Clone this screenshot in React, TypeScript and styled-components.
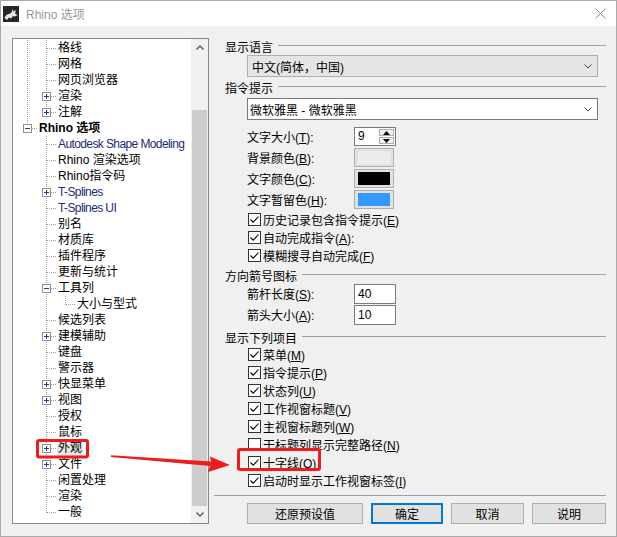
import React from "react";
import styled, { createGlobalStyle, css } from "styled-components";

const GlobalStyle = createGlobalStyle`
  html, body {
    margin: 0;
    padding: 0;
    background: #ffffff;
  }
  body {
    font-family: "Liberation Sans", "Noto Sans CJK SC", sans-serif;
    font-size: 12px;
    color: #000000;
  }
  * {
    box-sizing: border-box;
  }
`;

const Window = styled.div`
  position: relative;
  width: 617px;
  height: 537px;
  border: 1px solid #aaaaaa;
  background: #f0f0f0;
  display: flex;
  flex-direction: column;
`;

const TitleBar = styled.div`
  height: 25px;
  background: #ffffff;
  display: flex;
  align-items: center;
  padding-left: 2px;
`;

const TitleText = styled.span`
  margin-left: 7px;
  color: #999999;
  font-size: 12px;
`;

const CloseIcon = styled.svg`
  margin-left: auto;
  margin-right: 10px;
`;

const Body = styled.div`
  flex: 1;
  display: flex;
  padding: 12px 10px 0 11px;
`;

/* ---------- tree ---------- */

const TreePanel = styled.div`
  width: 197px;
  height: 486px;
  border: 1px solid #828790;
  background: #ffffff;
  display: flex;
`;

const TreeList = styled.div`
  flex: 1;
  padding: 1px 0 0 5px;
  overflow: hidden;
`;

const TreeRow = styled.div`
  display: flex;
  align-items: center;
  height: 16px;
`;

type GuideKind = "line" | "blank" | "tee" | "elbow";

const vdots = "repeating-linear-gradient(to bottom, #a0a0a0 0 1px, transparent 1px 2px)";
const hdots = "repeating-linear-gradient(to right, #a0a0a0 0 1px, transparent 1px 2px)";

const Guide = styled.span<{ $kind: GuideKind }>`
  flex: none;
  width: 19px;
  height: 16px;
  display: flex;
  align-items: center;
  background-repeat: no-repeat;
  ${({ $kind }) =>
    $kind === "line" &&
    css`
      background-image: ${vdots};
      background-size: 1px 16px;
      background-position: 9px 0;
    `}
  ${({ $kind }) =>
    $kind === "tee" &&
    css`
      background-image: ${vdots}, ${hdots};
      background-size: 1px 16px, 9px 1px;
      background-position: 9px 0, 10px 8px;
    `}
  ${({ $kind }) =>
    $kind === "elbow" &&
    css`
      background-image: ${vdots}, ${hdots};
      background-size: 1px 9px, 9px 1px;
      background-position: 9px 0, 10px 8px;
    `}
`;

const Expander = styled.span<{ $open: boolean }>`
  width: 9px;
  height: 9px;
  margin-left: 5px;
  border: 1px solid #919191;
  background-color: #ffffff;
  background-repeat: no-repeat;
  background-image: linear-gradient(#1e3c8c, #1e3c8c)
    ${({ $open }) => ($open ? "" : ", linear-gradient(#1e3c8c, #1e3c8c)")};
  background-size: 5px 1px, 1px 5px;
  background-position: 1px 3px, 3px 1px;
`;

const NodeLabel = styled.span<{ $bold?: boolean; $tint?: boolean; $selected?: boolean }>`
  margin-left: 1px;
  padding: 0 1px;
  line-height: 16px;
  white-space: nowrap;
  letter-spacing: ${({ $tint }) => ($tint ? "-0.6px" : "0")};
  font-weight: ${({ $bold }) => ($bold ? 700 : 400)};
  color: ${({ $tint }) => ($tint ? "#1d2b78" : "#000000")};
  background: ${({ $selected }) => ($selected ? "#e5e5e5" : "transparent")};
`;

const ScrollBar = styled.div`
  width: 17px;
  background: #f0f0f0;
  display: flex;
  flex-direction: column;
`;

const ScrollArrow = styled.div`
  height: 17px;
  display: flex;
  align-items: center;
  justify-content: center;
`;

const ScrollTrack = styled.div`
  flex: 1;
  padding-top: 54px;
  display: flex;
`;

const ScrollThumb = styled.div`
  flex: 1;
  margin: 0 1px;
  background: #cdcdcd;
`;

/* ---------- options pane ---------- */

const Pane = styled.div`
  width: 392px;
  margin-left: 5px;
  display: flex;
  flex-direction: column;
`;

const Section = styled.div<{ $gap: number }>`
  display: flex;
  align-items: center;
  height: 16px;
  padding-left: 11px;
  margin-top: ${({ $gap }) => $gap}px;
  &::after {
    content: "";
    flex: 1;
    height: 1px;
    margin: -2px 0 0 5px;
    background: #a0a0a0;
  }
`;

const Select = styled.div<{ $disabled?: boolean; $gap: number }>`
  margin: ${({ $gap }) => $gap}px 0 0 33px;
  width: 351px;
  height: 22px;
  display: flex;
  align-items: center;
  justify-content: space-between;
  padding: 0 5px 0 ${({ $disabled }) => ($disabled ? 4 : 2)}px;
  border: 1px solid ${({ $disabled }) => ($disabled ? "#adadad" : "#7a7a7a")};
  background: ${({ $disabled }) => ($disabled ? "#e5e5e5" : "#ffffff")};
`;

const FieldRow = styled.div<{ $gap?: number }>`
  display: flex;
  align-items: center;
  height: 21px;
  padding-left: 33px;
  margin-top: ${({ $gap }) => $gap ?? 0}px;
`;

const FieldLabel = styled.span`
  width: 107px;
`;

const Spin = styled.div`
  width: 42px;
  height: 19px;
  display: flex;
  border: 1px solid #7a7a7a;
  background: #ffffff;
`;

const SpinValue = styled.span`
  flex: 1;
  padding-left: 3px;
  line-height: 17px;
`;

const SpinButtons = styled.div`
  width: 16px;
  display: flex;
  flex-direction: column;
  padding: 1px 1px 1px 0;
  gap: 1px;
`;

const SpinButton = styled.div`
  flex: 1;
  border: 1px solid #adadad;
  background: #f0f0f0;
  display: flex;
  align-items: center;
  justify-content: center;
`;

const Swatch = styled.div<{ $color: string }>`
  width: 40px;
  height: 19px;
  display: flex;
  padding: 2px 3px;
  border: 1px solid #adadad;
  background: #e1e1e1;
  &::before {
    content: "";
    flex: 1;
    background: ${({ $color }) => $color};
  }
`;

const TextBox = styled.div`
  width: 42px;
  height: 20px;
  padding-left: 3px;
  line-height: 18px;
  border: 1px solid #7a7a7a;
  background: #ffffff;
`;

const CheckRow = styled.div`
  display: flex;
  align-items: center;
  gap: 2px;
  height: 18px;
  padding-left: 34px;
`;

const CheckBox = styled.span`
  width: 13px;
  height: 13px;
  display: flex;
  align-items: center;
  justify-content: center;
  border: 1px solid #333333;
  background: #ffffff;
`;

const Separator = styled.div`
  height: 1px;
  margin-top: 6px;
  background: #a0a0a0;
`;

const ButtonRow = styled.div`
  display: flex;
  gap: 8px;
  margin-top: 7px;
  padding-left: 33px;
`;

const Button = styled.div<{ $width: number; $default?: boolean }>`
  width: ${({ $width }) => $width}px;
  height: 21px;
  display: flex;
  align-items: center;
  justify-content: center;
  background: #e1e1e1;
  border: ${({ $default }) => ($default ? "2px solid #0078d7" : "1px solid #adadad")};
`;

const Annotations = styled.svg`
  position: absolute;
  left: -1px;
  top: -1px;
  pointer-events: none;
`;

/* ---------- data ---------- */

type Node = {
  label: string;
  guides: GuideKind[];
  expander?: "plus" | "minus";
  bold?: boolean;
  tint?: boolean;
  selected?: boolean;
};

const rhinoChild = (label: string, extra: Partial<Node> = {}): Node => ({
  label,
  guides: ["blank", "tee"],
  ...extra,
});

const nodes: Node[] = [
  { label: "格线", guides: ["line", "tee"] },
  { label: "网格", guides: ["line", "tee"] },
  { label: "网页浏览器", guides: ["line", "tee"] },
  { label: "渲染", guides: ["line", "tee"], expander: "plus" },
  { label: "注解", guides: ["line", "elbow"], expander: "plus" },
  { label: "Rhino 选项", guides: ["elbow"], expander: "minus", bold: true },
  rhinoChild("Autodesk Shape Modeling", { tint: true }),
  rhinoChild("Rhino 渲染选项"),
  rhinoChild("Rhino指令码"),
  rhinoChild("T-Splines", { tint: true, expander: "plus" }),
  rhinoChild("T-Splines UI", { tint: true }),
  rhinoChild("别名"),
  rhinoChild("材质库"),
  rhinoChild("插件程序"),
  rhinoChild("更新与统计"),
  rhinoChild("工具列", { expander: "minus" }),
  { label: "大小与型式", guides: ["blank", "line", "elbow"] },
  rhinoChild("候选列表"),
  rhinoChild("建模辅助", { expander: "plus" }),
  rhinoChild("键盘"),
  rhinoChild("警示器"),
  rhinoChild("快显菜单", { expander: "plus" }),
  rhinoChild("视图", { expander: "plus" }),
  rhinoChild("授权"),
  rhinoChild("鼠标"),
  rhinoChild("外观", { expander: "plus", selected: true }),
  rhinoChild("文件", { expander: "plus" }),
  rhinoChild("闲置处理"),
  rhinoChild("渲染"),
  { label: "一般", guides: ["blank", "elbow"] },
];

const displayItems: { text: string; key: string; checked: boolean }[] = [
  { text: "菜单", key: "M", checked: true },
  { text: "指令提示", key: "P", checked: true },
  { text: "状态列", key: "U", checked: true },
  { text: "工作视窗标题", key: "V", checked: true },
  { text: "主视窗标题列", key: "W", checked: true },
  { text: "干标题列显示完整路径", key: "N", checked: false },
  { text: "十字线", key: "O", checked: true },
  { text: "启动时显示工作视窗标签", key: "I", checked: true },
];

/* ---------- small drawings ---------- */

const Chevron = ({ up }: { up?: boolean }) => (
  <svg width="8" height="5" viewBox="0 0 8 5">
    <polyline
      points={up ? "0.5,4.5 4,1 7.5,4.5" : "0.5,0.5 4,4 7.5,0.5"}
      fill="none"
      stroke="#606060"
      strokeWidth="1.5"
    />
  </svg>
);

const DropArrow = () => (
  <svg width="8" height="5" viewBox="0 0 8 5">
    <polyline points="0.5,0.5 4,4 7.5,0.5" fill="none" stroke="#404040" strokeWidth="1" />
  </svg>
);

const Tri = ({ up }: { up?: boolean }) => (
  <svg width="7" height="4" viewBox="0 0 7 4">
    <polygon points={up ? "0,4 3.5,0 7,4" : "0,0 3.5,4 7,0"} fill="#000000" />
  </svg>
);

const Check = () => (
  <svg width="11" height="11" viewBox="0 0 11 11">
    <polyline points="1.5,5.5 4.2,8.2 9.5,2.5" fill="none" stroke="#000000" strokeWidth="1.1" />
  </svg>
);

const Key = ({ k }: { k: string }) => (
  <>
    (<u>{k}</u>)
  </>
);

const RhinoLogo = () => (
  <svg width="16" height="16" viewBox="0 0 16 16">
    <rect x="0" y="0" width="16" height="16" fill="#262626" />
    <path
      d="M1.5 12 C3 9 4 8 6 8 L8.5 6.5 L9.5 3 L10.5 5.5 L13 4 L12 7.5 L14.5 9 L12 10.5 L10 10 L8 12.5 L6 11.5 L4 14 Z"
      fill="#e6e6e6"
    />
  </svg>
);

const App: React.FC = () => (
  <>
    <GlobalStyle />
    <Window>
      <TitleBar>
        <RhinoLogo />
        <TitleText>Rhino 选项</TitleText>
        <CloseIcon width="11" height="11" viewBox="0 0 11 11">
          <path d="M0.5 0.5 L10.5 10.5 M10.5 0.5 L0.5 10.5" stroke="#8c8c8c" strokeWidth="1" />
        </CloseIcon>
      </TitleBar>

      <Body>
        <TreePanel>
          <TreeList>
            {nodes.map((n, i) => {
              const last = n.guides.length - 1;
              return (
                <TreeRow key={i}>
                  {n.guides.map((g, j) => (
                    <Guide key={j} $kind={g}>
                      {j === last && n.expander && <Expander $open={n.expander === "minus"} />}
                    </Guide>
                  ))}
                  <NodeLabel $bold={n.bold} $tint={n.tint} $selected={n.selected}>
                    {n.label}
                  </NodeLabel>
                </TreeRow>
              );
            })}
          </TreeList>
          <ScrollBar>
            <ScrollArrow>
              <Chevron up />
            </ScrollArrow>
            <ScrollTrack>
              <ScrollThumb />
            </ScrollTrack>
            <ScrollArrow>
              <Chevron />
            </ScrollArrow>
          </ScrollBar>
        </TreePanel>

        <Pane>
          <Section $gap={0}>显示语言</Section>
          <Select $disabled $gap={1}>
            <span>中文(简体，中国)</span>
            <DropArrow />
          </Select>

          <Section $gap={2}>指令提示</Section>
          <Select $gap={3}>
            <span>微软雅黑 - 微软雅黑</span>
            <DropArrow />
          </Select>

          <FieldRow $gap={6}>
            <FieldLabel>
              文字大小<Key k="T" />:
            </FieldLabel>
            <Spin>
              <SpinValue>9</SpinValue>
              <SpinButtons>
                <SpinButton>
                  <Tri up />
                </SpinButton>
                <SpinButton>
                  <Tri />
                </SpinButton>
              </SpinButtons>
            </Spin>
          </FieldRow>
          <FieldRow>
            <FieldLabel>
              背景颜色<Key k="B" />:
            </FieldLabel>
            <Swatch $color="#ececec" />
          </FieldRow>
          <FieldRow>
            <FieldLabel>
              文字颜色<Key k="C" />:
            </FieldLabel>
            <Swatch $color="#000000" />
          </FieldRow>
          <FieldRow>
            <FieldLabel>
              文字暂留色<Key k="H" />:
            </FieldLabel>
            <Swatch $color="#3399ff" />
          </FieldRow>

          <CheckRow>
            <CheckBox>
              <Check />
            </CheckBox>
            <span>
              历史记录包含指令提示<Key k="E" />
            </span>
          </CheckRow>
          <CheckRow>
            <CheckBox>
              <Check />
            </CheckBox>
            <span>
              自动完成指令<Key k="A" />:
            </span>
          </CheckRow>
          <CheckRow>
            <CheckBox>
              <Check />
            </CheckBox>
            <span>
              模糊搜寻自动完成<Key k="F" />
            </span>
          </CheckRow>

          <Section $gap={3}>方向箭号图标</Section>
          <FieldRow>
            <FieldLabel>
              箭杆长度<Key k="S" />:
            </FieldLabel>
            <TextBox>40</TextBox>
          </FieldRow>
          <FieldRow>
            <FieldLabel>
              箭头大小<Key k="A" />:
            </FieldLabel>
            <TextBox>10</TextBox>
          </FieldRow>

          <Section $gap={4}>显示下列项目</Section>
          {displayItems.map((item) => (
            <CheckRow key={item.key}>
              <CheckBox>{item.checked && <Check />}</CheckBox>
              <span>
                {item.text}
                <Key k={item.key} />
              </span>
            </CheckRow>
          ))}

          <Separator />
          <ButtonRow>
            <Button $width={116}>还原预设值</Button>
            <Button $width={72} $default>
              确定
            </Button>
            <Button $width={73}>取消</Button>
            <Button $width={74}>说明</Button>
          </ButtonRow>
        </Pane>
      </Body>

      <Annotations width="617" height="537" viewBox="0 0 617 537">
        <rect x="37.5" y="440.5" width="50" height="16.5" rx="1.5" fill="none" stroke="#ee1c1c" strokeWidth="3" />
        <rect x="238.5" y="449.5" width="81" height="20" rx="1.5" fill="none" stroke="#ee1c1c" strokeWidth="3" />
        <polygon
          points="111,455.2 211,461.6 210,456.5 230,465 208,472 210,466 111,457"
          fill="#ee1c1c"
        />
      </Annotations>
    </Window>
  </>
);

export default App;
